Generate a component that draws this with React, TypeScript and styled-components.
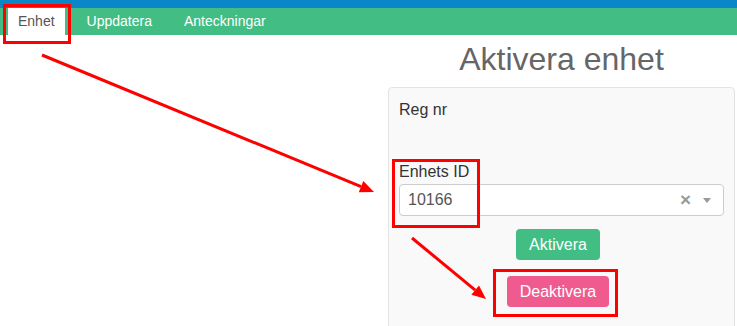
import React from "react";
import styled, { createGlobalStyle } from "styled-components";

const Global = createGlobalStyle`
  html, body { margin: 0; padding: 0; background: #ffffff; overflow: hidden; }
  body { font-family: "Liberation Sans", Arial, sans-serif; color: #333; }
  * { box-sizing: border-box; }
`;

const Page = styled.div`
  position: relative;
  width: 737px;
  height: 326px;
  overflow: hidden;
`;

const TopStrip = styled.div`
  height: 8px;
  background: #0a87c6;
`;

const Nav = styled.nav`
  height: 27px;
  background: #42bd84;
  display: flex;
  gap: 12px;
  padding-left: 8px;
`;

const Tab = styled.a<{ $active?: boolean }>`
  display: block;
  padding: 0 10px;
  line-height: 27px;
  font-size: 14px;
  text-decoration: none;
  color: ${(p) => (p.$active ? "#555" : "#fff")};
  background: ${(p) => (p.$active ? "#fff" : "transparent")};
`;

const Main = styled.div`
  display: flex;
  justify-content: flex-end;
  padding-right: 2px;
`;

const Column = styled.section`
  width: 347px;
  display: flex;
  flex-direction: column;
`;

const Title = styled.h1`
  margin: 7px 0 10px;
  font-size: 32px;
  font-weight: normal;
  line-height: 35px;
  text-align: center;
  color: #666;
`;

const Panel = styled.div`
  background: #f9f9f9;
  border: 1px solid #e3e3e3;
  border-radius: 4px;
  padding: 10px 10px 20px;
  min-height: 260px;
  display: flex;
  flex-direction: column;
`;

const FormGroup = styled.div<{ $space: number }>`
  margin-bottom: ${(p) => p.$space}px;
`;

const Label = styled.label`
  display: block;
  font-size: 16px;
  line-height: 23px;
  color: #333;
  margin-bottom: 1px;
`;

const Select = styled.div`
  height: 32px;
  background: #fff;
  border: 1px solid #ccc;
  border-radius: 4px;
  display: flex;
  align-items: center;
  padding: 0 12px 0 8px;
`;

const SelectValue = styled.span`
  flex: 1;
  font-size: 16px;
  color: #555;
`;

const Clear = styled.span`
  font-size: 19px;
  font-weight: bold;
  color: #999;
  line-height: 1;
  margin-right: 12px;
  margin-top: -1px;
`;

const Caret = styled.span`
  width: 0;
  height: 0;
  border-left: 4px solid transparent;
  border-right: 4px solid transparent;
  border-top: 5px solid #999;
`;

const Buttons = styled.div`
  display: flex;
  flex-direction: column;
  align-items: center;
  gap: 16px;
  margin-right: 7px;
`;

const Button = styled.button<{ $tone: "green" | "pink" }>`
  height: 31px;
  padding: 0 13px;
  border: none;
  border-radius: 4px;
  font-family: "Liberation Sans", Arial, sans-serif;
  font-size: 16px;
  color: #fff;
  background: ${(p) => (p.$tone === "green" ? "#42bd84" : "#ef5a8f")};
`;

const Overlay = styled.svg`
  position: absolute;
  left: 0;
  top: 0;
  pointer-events: none;
`;

function Arrow({ x1, y1, x2, y2 }: { x1: number; y1: number; x2: number; y2: number }) {
  const a = Math.atan2(y2 - y1, x2 - x1);
  const len = 14;
  const w = 6;
  const bx = x2 - len * Math.cos(a);
  const by = y2 - len * Math.sin(a);
  const px = -Math.sin(a) * w;
  const py = Math.cos(a) * w;
  return (
    <g>
      <line x1={x1} y1={y1} x2={bx} y2={by} stroke="#ff0000" strokeWidth={3} />
      <polygon points={`${x2},${y2} ${bx + px},${by + py} ${bx - px},${by - py}`} fill="#ff0000" />
    </g>
  );
}

export default function App() {
  return (
    <Page>
      <Global />
      <TopStrip />
      <Nav>
        <Tab $active>Enhet</Tab>
        <Tab>Uppdatera</Tab>
        <Tab>Anteckningar</Tab>
      </Nav>
      <Main>
        <Column>
          <Title>Aktivera enhet</Title>
          <Panel>
            <FormGroup $space={38}>
              <Label>Reg nr</Label>
            </FormGroup>
            <FormGroup $space={13}>
              <Label>Enhets ID</Label>
              <Select>
                <SelectValue>10166</SelectValue>
                <Clear>×</Clear>
                <Caret />
              </Select>
            </FormGroup>
            <Buttons>
              <Button $tone="green">Aktivera</Button>
              <Button $tone="pink">Deaktivera</Button>
            </Buttons>
          </Panel>
        </Column>
      </Main>
      <Overlay width={737} height={326} viewBox="0 0 737 326">
        <rect x={4.5} y={5.5} width={65} height={37} fill="none" stroke="#ff0000" strokeWidth={3} />
        <rect x={393.5} y={160.5} width={85} height={66} fill="none" stroke="#ff0000" strokeWidth={3} />
        <rect x={494.5} y={270.5} width={122} height={45} fill="none" stroke="#ff0000" strokeWidth={3} />
        <Arrow x1={42} y1={55} x2={374} y2={192} />
        <Arrow x1={412} y1={238} x2={486} y2={299} />
      </Overlay>
    </Page>
  );
}
